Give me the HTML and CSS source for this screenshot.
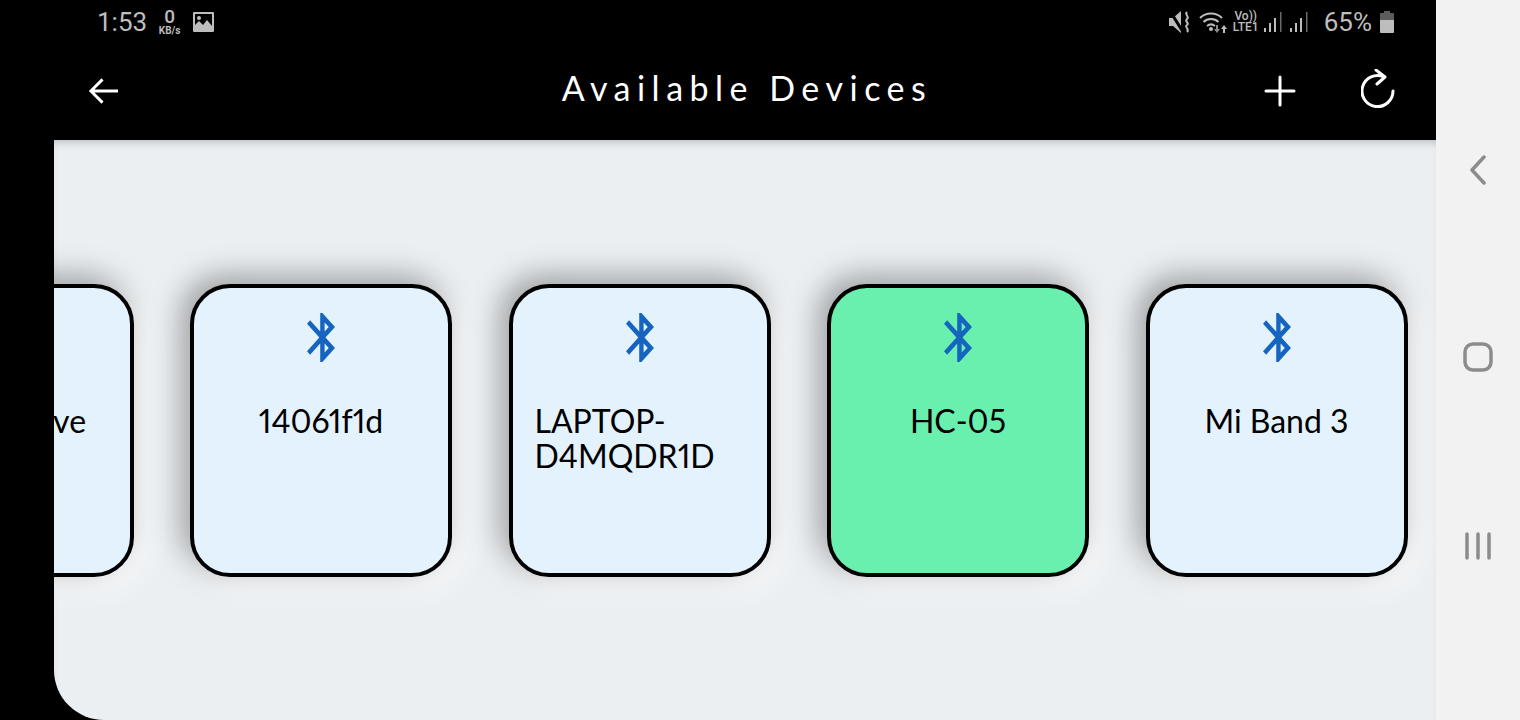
FILE: index.html
```html
<!DOCTYPE html>
<html lang="en">
    <head>
        <meta charset="UTF-8">
        <title>Available Devices</title>
        <link rel="stylesheet" href="styles.css">
    </head>
    <body>
        <div class="app">
            <div class="statusBar">
                <div class="statusLeft">
                    <span class="clock">1:53</span>
                    <span class="speed"><b>0</b><i>KB/s</i></span>
                    <svg class="picIcon" viewBox="0 0 21 20"><path fill="#bdbdbd" fill-rule="evenodd" d="M1 0h19a1 1 0 0 1 1 1v18a1 1 0 0 1-1 1H1a1 1 0 0 1-1-1V1a1 1 0 0 1 1-1zM2 2v11l4-4 4 4 4-5 5 6V2zM6 4a2 2 0 1 1 0 4 2 2 0 0 1 0-4z"/></svg>
                </div>
                <div class="statusRight">
                    <svg class="muteIcon" viewBox="0 0 22 22"><path fill="#bdbdbd" d="M0 7h4L12 0v22l-8-7H0z"/><path fill="none" stroke="#000" stroke-width="3" d="M1 0l13 21"/><path fill="none" stroke="#bdbdbd" stroke-width="2" d="M18 1c-3 3 3 4 0 7s3 4 0 6 3 4 0 7"/></svg>
                    <svg class="wifiIcon" viewBox="0 0 28 22"><g fill="none" stroke="#bdbdbd" stroke-width="2"><path d="M1 7c6-6 16-6 22 0"/><path d="M4.500 11c4-4 11-4 15 0"/><path d="M8 15c2.500-2 5.500-2 8 0"/></g><circle cx="12" cy="18" r="2" fill="#bdbdbd"/><path fill="#8a8a8a" d="M17 14h2v4h2l-3 4-3-4h2z"/><path fill="#bdbdbd" d="M24 22v-4h-2l3-4 3 4h-2v4z"/></svg>
                    <span class="lte"><span>Vo))</span><span>LTE1</span></span>
                    <svg class="signalIcon" viewBox="0 0 18 20"><path fill="#bdbdbd" d="M0 16h2v4H0zM5 11h2v9H5zM10 6h2v14h-2z"/><path fill="#6a6a6a" d="M16 0h1.500v20H16z"/></svg>
                    <svg class="signalIcon" viewBox="0 0 18 20"><path fill="#bdbdbd" d="M0 16h2v4H0zM5 11h2v9H5zM10 6h2v14h-2z"/><path fill="#6a6a6a" d="M16 0h1.500v20H16z"/></svg>
                    <span class="battery">65%</span>
                    <svg class="batteryIcon" viewBox="0 0 14 22"><path fill="#5c5c5c" d="M4 0h6v2h3a1 1 0 0 1 1 1v6H0V3a1 1 0 0 1 1-1h3z"/><path fill="#bdbdbd" d="M0 9h14v12a1 1 0 0 1-1 1H1a1 1 0 0 1-1-1z"/></svg>
                </div>
            </div>

            <div class="topBar">
                <svg class="backIcon" viewBox="0 0 32 28"><path fill="none" stroke="#fff" stroke-width="3" d="M31 14H3M15 2L3 14l12 12"/></svg>
                <h1 class="title">Available Devices</h1>
                <svg class="addIcon" viewBox="0 0 32 32"><path fill="none" stroke="#fff" stroke-width="3" stroke-linecap="round" d="M16 2v28M2 16h28"/></svg>
                <svg class="refreshIcon" viewBox="0 0 34 40"><path fill="none" stroke="#fff" stroke-width="3" stroke-linecap="round" stroke-linejoin="round" d="M23 8A15.500 15.500 0 1 0 32 22M15 1l9 7-8 7"/></svg>
            </div>

            <div class="content">
                <div class="panel">
                    <div class="deviceRow">
                        <div class="card">
                            <svg class="btIcon" viewBox="5 2 12.710 20" preserveAspectRatio="none"><path fill="#1565c0" d="M17.710 7.710L12 2h-1v7.590L6.410 5 5 6.410 10.590 12 5 17.590 6.410 19 11 14.410V22h1l5.710-5.710-4.300-4.290 4.300-4.290zM13 5.830l1.880 1.880L13 9.590V5.830zm1.880 10.460L13 18.170v-3.760l1.880 1.880z"/></svg>
                            <div class="name">Galaxy Dive</div>
                        </div>
                        <div class="card">
                            <svg class="btIcon" viewBox="5 2 12.710 20" preserveAspectRatio="none"><path fill="#1565c0" d="M17.710 7.710L12 2h-1v7.590L6.410 5 5 6.410 10.590 12 5 17.590 6.410 19 11 14.410V22h1l5.710-5.710-4.300-4.290 4.300-4.290zM13 5.830l1.880 1.880L13 9.590V5.830zm1.880 10.460L13 18.170v-3.760l1.880 1.880z"/></svg>
                            <div class="name">14061f1d</div>
                        </div>
                        <div class="card">
                            <svg class="btIcon" viewBox="5 2 12.710 20" preserveAspectRatio="none"><path fill="#1565c0" d="M17.710 7.710L12 2h-1v7.590L6.410 5 5 6.410 10.590 12 5 17.590 6.410 19 11 14.410V22h1l5.710-5.710-4.300-4.290 4.300-4.290zM13 5.830l1.880 1.880L13 9.590V5.830zm1.880 10.460L13 18.170v-3.760l1.880 1.880z"/></svg>
                            <div class="name">LAPTOP-D4MQDR1D</div>
                        </div>
                        <div class="card selected">
                            <svg class="btIcon" viewBox="5 2 12.710 20" preserveAspectRatio="none"><path fill="#1565c0" d="M17.710 7.710L12 2h-1v7.590L6.410 5 5 6.410 10.590 12 5 17.590 6.410 19 11 14.410V22h1l5.710-5.710-4.300-4.290 4.300-4.290zM13 5.830l1.880 1.880L13 9.590V5.830zm1.880 10.460L13 18.170v-3.760l1.880 1.880z"/></svg>
                            <div class="name">HC-05</div>
                        </div>
                        <div class="card">
                            <svg class="btIcon" viewBox="5 2 12.710 20" preserveAspectRatio="none"><path fill="#1565c0" d="M17.710 7.710L12 2h-1v7.590L6.410 5 5 6.410 10.590 12 5 17.590 6.410 19 11 14.410V22h1l5.710-5.710-4.300-4.290 4.300-4.290zM13 5.830l1.880 1.880L13 9.590V5.830zm1.880 10.460L13 18.170v-3.760l1.880 1.880z"/></svg>
                            <div class="name">Mi Band 3</div>
                        </div>
                    </div>
                </div>
            </div>
        </div>

        <div class="navBar">
            <svg class="navBack" viewBox="0 0 18 30"><path fill="none" stroke="#8c8c8c" stroke-width="3.500" stroke-linecap="round" stroke-linejoin="round" d="M15 2L3 15l12 13"/></svg>
            <svg class="navHome" viewBox="0 0 30 30"><rect x="2" y="2" width="26" height="26" rx="8" fill="none" stroke="#8c8c8c" stroke-width="3.500"/></svg>
            <svg class="navRecent" viewBox="0 0 26 28"><path fill="none" stroke="#8c8c8c" stroke-width="3.500" stroke-linecap="round" d="M2 2v24M13 2v24M24 2v24"/></svg>
        </div>
    </body>
</html>
```

FILE: styles.css
```css
*{
    box-sizing: border-box;
}

html, body{
    height: 100%;
}

body{
    margin: 0;
    display: flex;
    overflow: hidden;
    background: #000;
    font-family: "Lato", "Liberation Sans", sans-serif;
}

.app{
    width: 1436px;
    height: 720px;
    display: flex;
    flex-direction: column;
    background: #000;
}

.statusBar{
    height: 44px;
    padding: 0 42px 0 97px;
    display: flex;
    align-items: center;
    justify-content: space-between;
    color: #bdbdbd;
    font-family: "Roboto", sans-serif;
}

.statusLeft, .statusRight{
    display: flex;
    align-items: center;
}

.clock{
    font-size: 26px;
    margin-right: 10px;
}

.speed{
    display: flex;
    flex-direction: column;
    align-items: center;
    width: 25px;
    margin-right: 11px;
    line-height: 1;
}

.speed b{
    font-size: 19px;
    font-weight: 500;
    line-height: 18px;
}

.speed i{
    font-style: normal;
    font-size: 10px;
    font-weight: 700;
    line-height: 10px;
}

.picIcon{
    width: 21px;
    height: 20px;
}

.muteIcon{
    width: 22px;
    height: 22px;
    margin-right: 8px;
}

.wifiIcon{
    width: 28px;
    height: 22px;
    margin-right: 6px;
}

.lte{
    display: flex;
    flex-direction: column;
    align-items: center;
    width: 26px;
    font-size: 12px;
    font-weight: 500;
    line-height: 11px;
    margin-right: 5px;
}

.signalIcon{
    width: 18px;
    height: 20px;
    margin-right: 8px;
}

.battery{
    font-size: 26px;
    margin: 0 8px;
}

.batteryIcon{
    width: 14px;
    height: 22px;
}

.topBar{
    height: 96px;
    padding: 0 41px 8px 88px;
    display: flex;
    align-items: center;
}

.backIcon{
    width: 31px;
    height: 28px;
    margin-top: 6px;
}

.title{
    flex: 1;
    margin: 0 0 2px 0;
    text-align: center;
    color: #fff;
    font-size: 34px;
    font-weight: 400;
    letter-spacing: 6.500px;
    padding-left: 111px;
}

.addIcon{
    width: 32px;
    height: 32px;
    margin: 5px 65px 0 0;
}

.refreshIcon{
    width: 34px;
    height: 40px;
    margin-top: 2px;
}

.content{
    flex: 1;
    display: flex;
    padding-left: 54px;
}

.panel{
    flex: 1;
    display: flex;
    align-items: center;
    overflow: hidden;
    background: #ebeff2;
    border-bottom-left-radius: 50px;
    box-shadow: inset 0 7px 8px -5px rgba(0, 0, 0, 0.22);
}

.deviceRow{
    display: flex;
    gap: 56.500px;
    margin-left: -182.500px;
    flex-shrink: 0;
}

.card{
    width: 262px;
    height: 293px;
    flex-shrink: 0;
    display: flex;
    flex-direction: column;
    align-items: center;
    padding: 25px 22px 0;
    background: #e3f2fd;
    border: 4px solid #000;
    border-radius: 40px;
    box-shadow: -8px -8px 30px rgba(0, 0, 0, 0.35), 10px 10px 30px rgba(255, 255, 255, 0.9);
}

.selected{
    background: #69f0ae;
}

.btIcon{
    width: 28px;
    height: 49px;
    flex-shrink: 0;
}

.name{
    margin-top: 41px;
    font-size: 32px;
    line-height: 35px;
    color: #000;
    font-variant-numeric: proportional-nums;
}

.navBar{
    width: 84px;
    height: 720px;
    background: #f2f2f2;
    display: flex;
    flex-direction: column;
    align-items: center;
    padding-top: 155px;
}

.navBack{
    width: 18px;
    height: 30px;
}

.navHome{
    width: 30px;
    height: 30px;
    margin-top: 157px;
}

.navRecent{
    width: 26px;
    height: 28px;
    margin-top: 160px;
}
```
